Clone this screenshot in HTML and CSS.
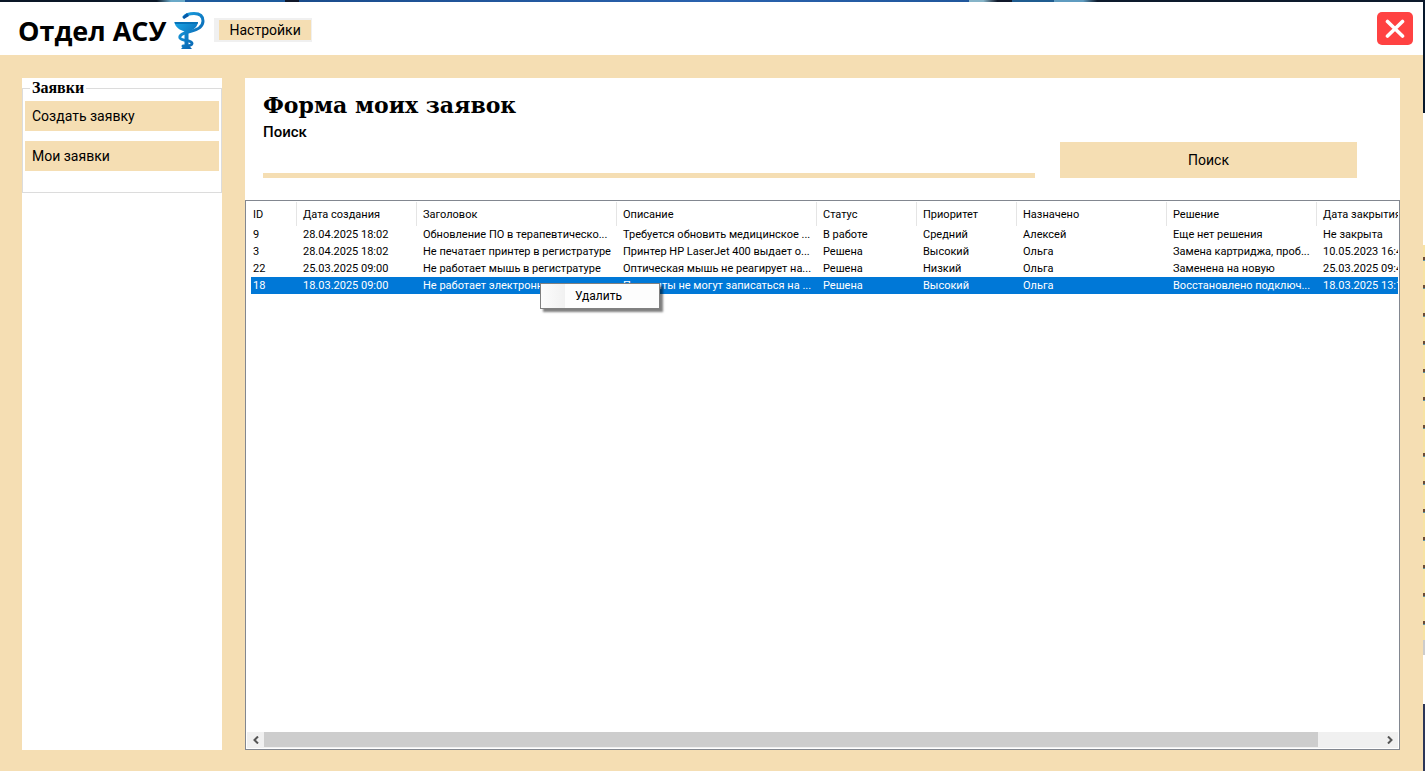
FILE: index.html
```html
<!DOCTYPE html>
<html lang="ru">
<head>
<meta charset="utf-8">
<title>Отдел АСУ</title>
<link rel="stylesheet" href="styles.css">
</head>
<body>
<div class="desktop">
  <div class="window">
    <header class="titlebar">
      <h1 class="brand">Отдел АСУ</h1>
      <svg class="logo" viewBox="0 0 32 40" aria-hidden="true">
        <defs><linearGradient id="blue" x1="0" y1="0" x2="1" y2="1"><stop offset="0" stop-color="#1aa7e6"/><stop offset="1" stop-color="#0759a8"/></linearGradient></defs>
        <path d="M10 6C12 3.500 15 2.500 20 2.500C26 2.500 29 5.500 29 10C29 15.500 23 19 16 20.500C9 22 5 24 6 27C7.500 30.500 18 28.500 18 32.500C18 34.500 14 35 9 35" fill="none" stroke="url(#blue)" stroke-width="3" stroke-linecap="round"/>
        <path d="M8.500 6L13 2L15 5L10 8Z" fill="#0759a8"/>
        <path d="M0.500 11H24C23.500 16 19 19.500 14.500 20.500V34L18 38H7L10.500 34V20.500C5.500 19 1 16 0.500 11Z" fill="url(#blue)"/>
        <path d="M0.500 11H24L23.500 13H1Z" fill="#0873b8"/>
      </svg>
      <nav class="menubar"><button class="menubar-item" type="button">Настройки</button></nav>
      <button class="close" type="button" aria-label="Закрыть">
        <svg class="close-icon" viewBox="0 0 20 20" aria-hidden="true"><path d="M2.500 2.500L17.500 17M17.500 2.500L2.500 17" stroke="#fff" stroke-width="3.600" stroke-linecap="round"/></svg>
      </button>
    </header>
    <div class="workspace">
      <aside class="sidebar">
        <fieldset class="group">
          <legend class="group-title">Заявки</legend>
          <button class="side-button" type="button">Создать заявку</button>
          <button class="side-button" type="button">Мои заявки</button>
        </fieldset>
      </aside>
      <main class="panel">
        <div class="panel-head">
          <h2 class="panel-title">Форма моих заявок</h2>
          <label class="search-label" for="search">Поиск</label>
          <form class="search">
            <input class="search-input" id="search" type="text">
            <button class="search-button" type="button">Поиск</button>
          </form>
        </div>
        <section class="list">
          <div class="list-view">
            <table class="tickets">
              <colgroup><col class="c-id"><col class="c-date"><col class="c-text"><col class="c-text"><col class="c-short"><col class="c-short"><col class="c-medium"><col class="c-medium"><col class="c-date"></colgroup>
              <thead><tr><th>ID</th><th>Дата создания</th><th>Заголовок</th><th>Описание</th><th>Статус</th><th>Приоритет</th><th>Назначено</th><th>Решение</th><th>Дата закрытия</th></tr></thead>
              <tbody>
                <tr><td>9</td><td>28.04.2025 18:02</td><td>Обновление ПО в терапевтическо...</td><td>Требуется обновить медицинское ...</td><td>В работе</td><td>Средний</td><td>Алексей</td><td>Еще нет решения</td><td>Не закрыта</td></tr>
                <tr><td>3</td><td>28.04.2025 18:02</td><td>Не печатает принтер в регистратуре</td><td>Принтер HP LaserJet 400 выдает о...</td><td>Решена</td><td>Высокий</td><td>Ольга</td><td>Замена картриджа, проб...</td><td>10.05.2023 16:4</td></tr>
                <tr><td>22</td><td>25.03.2025 09:00</td><td>Не работает мышь в регистратуре</td><td>Оптическая мышь не реагирует на...</td><td>Решена</td><td>Низкий</td><td>Ольга</td><td>Заменена на новую</td><td>25.03.2025 09:4</td></tr>
                <tr class="selected"><td>18</td><td>18.03.2025 09:00</td><td>Не работает электронн</td><td>Пациенты не могут записаться на ...</td><td>Решена</td><td>Высокий</td><td>Ольга</td><td>Восстановлено подключ...</td><td>18.03.2025 13:1</td></tr>
              </tbody>
            </table>
          </div>
          <div class="scrollbar">
            <button class="arrow" type="button" aria-label="Влево"><svg class="arrow-icon" viewBox="0 0 8 8"><path d="M6 0.500L2.500 4L6 7.500" fill="none" stroke="#555" stroke-width="2"/></svg></button>
            <div class="thumb"></div>
            <div class="track"></div>
            <button class="arrow" type="button" aria-label="Вправо"><svg class="arrow-icon" viewBox="0 0 8 8"><path d="M2 0.500L5.500 4L2 7.500" fill="none" stroke="#555" stroke-width="2"/></svg></button>
          </div>
          <div class="context-menu"><button class="context-item" type="button">Удалить</button></div>
        </section>
      </main>
    </div>
  </div>
</div>
</body>
</html>
```
FILE: styles.css
```css
* { box-sizing: border-box; }
body {
  margin: 0;
  font-family: "Roboto", "Liberation Sans", sans-serif;
  font-size: 14px;
  color: #000;
}
button { font: inherit; color: inherit; border: 0; padding: 0; border-radius: 0; }

.desktop {
  min-height: 100vh;
  display: flex;
  padding: 2px 2px 0 0;
  background:
    linear-gradient(90deg, #0a1626 0 11%, #6aa9c8 12% 13%, #1d5a9c 13% 20%, #10182a 20% 21%, #1a4c8c 21%, #2a62ae 50%, #20579c 68%, #86b4c8 68% 69%, #10182a 70% 71%, #1f5c90 71% 74%, #5f9cc0 74% 76%, #0d1a2c 77%) left top / 100% 2px no-repeat,
    repeating-linear-gradient(#f7e3a4 0 12px, #6b4a35 12px 15px, #5a90a0 15px 16px, #f7e3a4 16px 28px) right top 245px / 2px 395px no-repeat,
    linear-gradient(#07182c 0 113px, #fff 113px 640px, #ccc 640px 655px, #fff 655px 704px, #2c3658 704px);
}
.window { flex: 1; min-width: 0; display: flex; flex-direction: column; background: #f5deb3; }

.titlebar {
  display: flex;
  align-items: center;
  height: 53px;
  padding: 0 10px 0 18px;
  background: #fff;
}
.brand {
  margin: 4px 0 0;
  font: bold 27px/40px "Open Sans", sans-serif;
}
.logo { width: 32px; height: 40px; margin: 4px 0 0 8px; }
.menubar { margin: 2px 0 0 8px; padding: 2px 1px 2px 5px; background: #f0f0f0; }
.menubar-item { display: block; height: 20px; padding: 0 10px; line-height: 20px; background: #f5deb3; }
.close {
  display: grid;
  place-items: center;
  width: 36px;
  height: 33px;
  margin-left: auto;
  border-radius: 5px;
  background: #ff4242;
}
.close-icon { width: 20px; height: 20px; }

.workspace { flex: 1; display: flex; gap: 23px; padding: 23px 23px 21px 22px; }
.sidebar { width: 200px; background: #fff; }
.group {
  display: flex;
  flex-direction: column;
  gap: 10px;
  min-width: 0;
  margin: 0;
  padding: 3px 2px 21px;
  border: 1px solid #dcdcdc;
}
.group-title { margin-left: 5px; padding: 0 2px; font: bold 16px/20px "Liberation Serif", serif; }
.side-button { height: 30px; padding: 0 7px; text-align: left; background: #f5deb3; }

.panel { flex: 1; min-width: 0; display: flex; flex-direction: column; background: #fff; }
.panel-head { padding: 10px 43px 22px 18px; }
.panel-title { margin: 0; font: bold 22px/34px "DejaVu Serif", serif; }
.search-label { display: block; font-size: 15px; line-height: 20px; font-weight: 500; }
.search { display: flex; gap: 25px; height: 36px; }
.search-input { flex: 772 1 0; min-width: 0; border: 0; border-bottom: 5px solid #f5deb3; padding: 0; outline: 0; background: none; font: inherit; }
.search-button { flex: 297 1 0; background: #f5deb3; }

.list { flex: 1; position: relative; display: flex; flex-direction: column; padding: 1px; border: 1px solid #828790; }
.list-view { flex: 1; overflow: hidden; padding-left: 4px; }
.tickets { width: 1186px; table-layout: fixed; border-collapse: separate; border-spacing: 0; font-size: 11px; }
.c-id { width: 46px; }
.c-date { width: 120px; }
.c-text { width: 200px; }
.c-short { width: 100px; }
.c-medium { width: 150px; }
.tickets th { height: 24px; padding: 0 6px; border-right: 1px solid #e5e5e5; font-weight: normal; text-align: left; white-space: nowrap; }
.tickets td { height: 17px; padding: 1px 0 0 6px; line-height: 16px; white-space: nowrap; }
.tickets th:first-child, .tickets td:first-child { padding-left: 2px; }
.tickets .selected { color: #fff; background: #0078d7; }

.scrollbar { display: flex; height: 16px; background: #f0f0f0; }
.arrow { display: grid; place-items: center; width: 17px; background: #f0f0f0; }
.arrow-icon { width: 8px; height: 8px; }
.thumb { flex: 1054 1 0; height: 15px; background: #cdcdcd; }
.track { flex: 63 1 0; }

.context-menu {
  position: absolute;
  left: 294px;
  top: 82px;
  width: 120px;
  padding: 2px;
  border: 1px solid #808080;
  background: linear-gradient(90deg, #fcfcfc, #f1f1f1 24px, #fdfdfd 24px);
  box-shadow: 3px 3px 2px rgba(0, 0, 0, 0.5);
}
.context-item { display: block; width: 100%; height: 20px; padding-left: 32px; font-size: 12px; text-align: left; background: none; }
```
